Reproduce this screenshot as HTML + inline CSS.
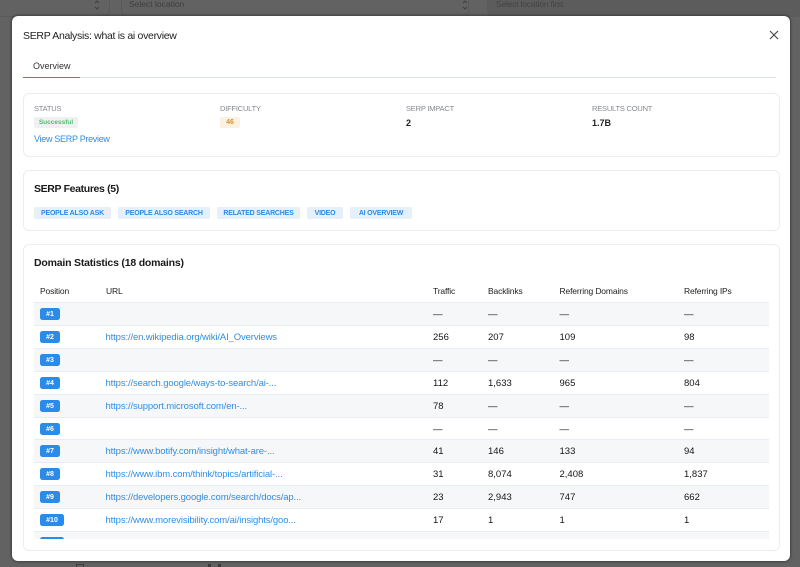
<!DOCTYPE html>
<html>
<head>
<meta charset="utf-8">
<style>
html,body{margin:0;padding:0;width:800px;height:567px;overflow:hidden}
#root{position:absolute;left:0;top:0;width:800px;height:567px;overflow:hidden;background:#626262;font-family:"Liberation Sans",sans-serif;color:#1a1a1a}
.a{position:absolute;white-space:nowrap}
.bgbox{position:absolute;border:1px solid #5a5a5a;border-radius:6px}
#modal{position:absolute;left:12px;top:16px;width:778px;height:545px;background:#fff;border-radius:6px;box-shadow:0 0 2px 1px rgba(0,0,0,.35)}
.card{position:absolute;left:23px;width:755px;background:#fff;border:1px solid #e9edf2;border-radius:6px}
.lbl{font-size:7.5px;color:#85898f;line-height:10px;letter-spacing:-.2px}
.val{font-size:9px;font-weight:bold;color:#222;line-height:11px}
.h{font-size:10.5px;font-weight:bold;color:#1a1a1a;line-height:13px;letter-spacing:-.2px}
.chip{position:absolute;top:207px;height:12px;line-height:14px;background:#e6f0fa;border-radius:2px;color:#2a8ae6;font-size:7px;font-weight:bold;text-align:center;letter-spacing:-.2px}
.th{font-size:8.5px;color:#222;line-height:10px;position:absolute;top:286px;white-space:nowrap;font-weight:normal;letter-spacing:-.15px}
#tbl{position:absolute;left:34px;top:302px;width:735px;height:237px;overflow:hidden}
.r{position:absolute;left:0;width:735px;height:22px;border-top:1px solid #e9ecf1}
.r.o{background:#f6f7f9}
.b{position:absolute;left:6px;top:5px;height:12px;line-height:14px;width:20px;background:#2b8be8;border-radius:2.5px;color:#fff;font-size:7px;font-weight:bold;text-align:center}
.u{position:absolute;left:71.5px;top:6px;line-height:12px;font-size:9.5px;color:#2f8ee4;white-space:nowrap;letter-spacing:-.13px}
.c{position:absolute;top:6px;line-height:12px;font-size:9.5px;color:#151515;white-space:nowrap}
.c1{left:399px}.c2{left:454px}.c3{left:525.5px}.c4{left:650px}
</style>
</head>
<body>
<div id="root">
<div class="bgbox" style="left:-10px;top:-20px;width:118px;height:35px"></div>
<div class="bgbox" style="left:121px;top:-20px;width:346px;height:35px"></div>
<div class="bgbox" style="left:487px;top:-20px;width:320px;height:35px;background:#5c5c5c;border-color:#5c5c5c"></div>
<div class="a" style="left:129px;top:0;font-size:8.5px;line-height:9px;color:#3e3e3e">Select location</div>
<div class="a" style="left:496px;top:0;font-size:8.5px;line-height:9px;color:#444;letter-spacing:-.2px">Select location first</div>
<svg class="a" style="left:93px;top:0" width="8" height="10" viewBox="0 0 8 10"><path d="M2 3L4 1L6 3M2 7L4 9L6 7" stroke="#3e3e3e" fill="none"/></svg>
<svg class="a" style="left:461px;top:0" width="8" height="10" viewBox="0 0 8 10"><path d="M2 3L4 1L6 3M2 7L4 9L6 7" stroke="#3e3e3e" fill="none"/></svg>
<div class="a" style="left:76px;top:564px;width:6px;height:8px;border:1px solid #3a3a3a"></div>
<div class="a" style="left:208px;top:564px;width:3px;height:5px;background:#3a3a3a"></div>
<div class="a" style="left:218px;top:564px;width:3px;height:5px;background:#3a3a3a"></div>

<div id="modal"></div>

<div class="a" style="left:23px;top:29px;font-size:10.5px;line-height:14px;color:#222;letter-spacing:-.3px">SERP Analysis: what is ai overview</div>
<svg class="a" style="left:767px;top:28px" width="14" height="14" viewBox="0 0 14 14"><path d="M3 3L11 11M11 3L3 11" stroke="#444" stroke-width="1.1" fill="none"/></svg>
<div class="a" style="left:33px;top:60px;font-size:9px;line-height:12px;color:#333">Overview</div>
<div class="a" style="left:23px;top:77px;width:753px;height:1px;background:#dbe3ec"></div>
<div class="a" style="left:23px;top:77px;width:57px;height:1px;background:#2b8be8"></div>

<div class="card" style="top:93px;height:62px"></div>
<div class="a lbl" style="left:34px;top:104px">STATUS</div>
<div class="a" style="left:34px;top:117px;width:44px;height:11px;background:#eef0f3;border-radius:2px;text-align:center;font-size:6.5px;line-height:12px;font-weight:bold;color:#4fbf6f">Successful</div>
<div class="a" style="left:34px;top:133px;font-size:9px;line-height:12px;color:#2f8ee4;letter-spacing:-.3px">View SERP Preview</div>
<div class="a lbl" style="left:220px;top:104px">DIFFICULTY</div>
<div class="a" style="left:220px;top:117px;width:20px;height:11px;background:#fcf1de;border-radius:2px;text-align:center;font-size:7px;line-height:12px;font-weight:bold;color:#cf9440">46</div>
<div class="a lbl" style="left:406px;top:104px">SERP IMPACT</div>
<div class="a val" style="left:406px;top:118px">2</div>
<div class="a lbl" style="left:592px;top:104px">RESULTS COUNT</div>
<div class="a val" style="left:592px;top:118px">1.7B</div>

<div class="card" style="top:170px;height:59px"></div>
<div class="a h" style="left:34px;top:183px;letter-spacing:-.35px">SERP Features (5)</div>
<div class="chip" style="left:34px;width:77px">PEOPLE ALSO ASK</div>
<div class="chip" style="left:118px;width:92px">PEOPLE ALSO SEARCH</div>
<div class="chip" style="left:217px;width:83px">RELATED SEARCHES</div>
<div class="chip" style="left:307px;width:36px">VIDEO</div>
<div class="chip" style="left:350px;width:62px">AI OVERVIEW</div>

<div class="card" style="top:244px;height:305px"></div>
<div class="a h" style="left:34px;top:257px">Domain Statistics (18 domains)</div>
<div class="th" style="left:40px">Position</div>
<div class="th" style="left:106px">URL</div>
<div class="th" style="left:433px">Traffic</div>
<div class="th" style="left:488px">Backlinks</div>
<div class="th" style="left:559.5px">Referring Domains</div>
<div class="th" style="left:684px">Referring IPs</div>

<div id="tbl">
<div class="r o" style="top:0"><span class="b">#1</span><span class="c c1">—</span><span class="c c2">—</span><span class="c c3">—</span><span class="c c4">—</span></div>
<div class="r" style="top:22.9px"><span class="b">#2</span><span class="u">https://en.wikipedia.org/wiki/AI_Overviews</span><span class="c c1">256</span><span class="c c2">207</span><span class="c c3">109</span><span class="c c4">98</span></div>
<div class="r o" style="top:45.8px"><span class="b">#3</span><span class="c c1">—</span><span class="c c2">—</span><span class="c c3">—</span><span class="c c4">—</span></div>
<div class="r" style="top:68.7px"><span class="b">#4</span><span class="u">https://search.google/ways-to-search/ai-...</span><span class="c c1">112</span><span class="c c2">1,633</span><span class="c c3">965</span><span class="c c4">804</span></div>
<div class="r o" style="top:91.6px"><span class="b">#5</span><span class="u">https://support.microsoft.com/en-...</span><span class="c c1">78</span><span class="c c2">—</span><span class="c c3">—</span><span class="c c4">—</span></div>
<div class="r" style="top:114.5px"><span class="b">#6</span><span class="c c1">—</span><span class="c c2">—</span><span class="c c3">—</span><span class="c c4">—</span></div>
<div class="r o" style="top:137.4px"><span class="b">#7</span><span class="u">https://www.botify.com/insight/what-are-...</span><span class="c c1">41</span><span class="c c2">146</span><span class="c c3">133</span><span class="c c4">94</span></div>
<div class="r" style="top:160.3px"><span class="b">#8</span><span class="u">https://www.ibm.com/think/topics/artificial-...</span><span class="c c1">31</span><span class="c c2">8,074</span><span class="c c3">2,408</span><span class="c c4">1,837</span></div>
<div class="r o" style="top:183.2px"><span class="b">#9</span><span class="u">https://developers.google.com/search/docs/ap...</span><span class="c c1">23</span><span class="c c2">2,943</span><span class="c c3">747</span><span class="c c4">662</span></div>
<div class="r" style="top:206.1px"><span class="b" style="width:24px">#10</span><span class="u">https://www.morevisibility.com/ai/insights/goo...</span><span class="c c1">17</span><span class="c c2">1</span><span class="c c3">1</span><span class="c c4">1</span></div>
<div class="r o" style="top:229px"><span class="b" style="width:24px">#11</span><span class="u">https://blog.hubspot.com/marketing/ai-overview...</span><span class="c c1">15</span><span class="c c2">352</span><span class="c c3">120</span><span class="c c4">110</span></div>
</div>
</div>
</body>
</html>
